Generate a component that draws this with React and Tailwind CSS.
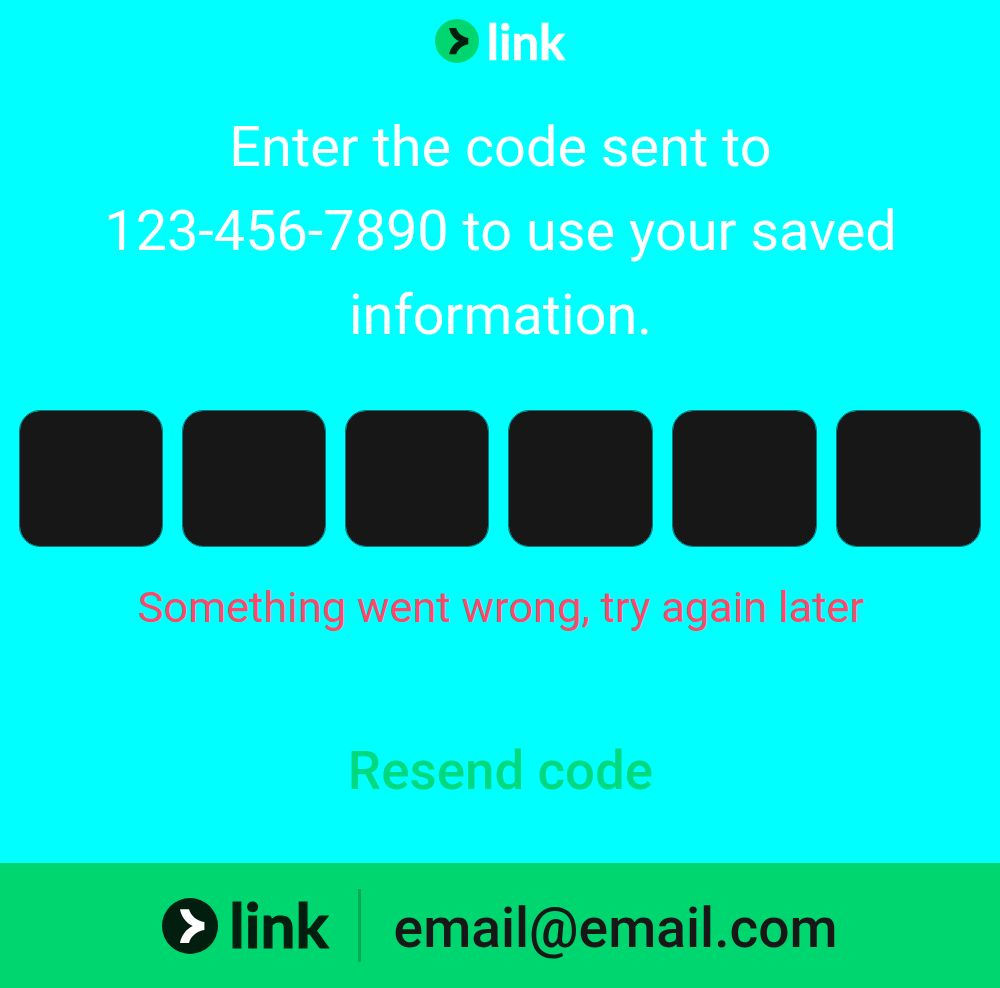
function Mark({ size, bg, fg }) {
  return (
    <svg width={size} height={size} viewBox="0 0 56 56" className="shrink-0">
      <circle cx="28" cy="28" r="28" fill={bg} />
      <path d="M27 11.3H18C19.3 18.500 24 25 30.8 28.100C24 31.300 19.300 37.700 18 45H27C28.600 38.400 35 33.200 42.400 32.100V24.100C35 23 28.600 17.800 27 11.300Z" fill={fg} />
    </svg>
  );
}

export default function App() {
  return (
    <main className="flex h-[988px] w-[1000px] flex-col overflow-hidden bg-[#00ffff] font-['Roboto',sans-serif]">
      <header className="flex h-[82px] items-center justify-center gap-2 text-white">
        <Mark size={44} bg="#00d66f" fg="#011e0f" />
        <span className="font-['Lato',sans-serif] text-[49px] leading-none font-bold [-webkit-text-stroke:0.6px_#ffffff]">link</span>
      </header>
      <h1 className="mt-[23px] pl-px text-center text-[55.8px] leading-[84px] font-normal text-white">
        Enter the code sent to<br />123-456-7890 to use your saved<br />information.
      </h1>
      <div className="mt-[53px] grid grid-cols-[144px_144px_144px_145px_145px_145px] gap-[19px] pl-[19px]">
        {[0, 1, 2, 3, 4, 5].map((n) => (
          <div key={n} className="h-[137px] rounded-[21px] border border-[#0e7676] bg-[#171717] bg-clip-padding" />
        ))}
      </div>
      <p className="mt-[31px] pl-[2px] text-center text-[43.4px] leading-[60px] text-[#ff4768]">Something went wrong, try again later</p>
      <button className="mt-[101px] h-[64px] pl-px text-center text-[52.9px] leading-[64px] font-medium text-[#00d980]">Resend code</button>
      <footer className="mt-auto flex h-[125px] items-center justify-center bg-[#00d66f] text-[#171717]">
        <Mark size={56} bg="#011e0f" fg="#ffffff" />
        <span className="-mt-[3px] ml-[11px] font-['Lato',sans-serif] text-[62px] leading-none font-bold text-[#011e0f] [-webkit-text-stroke:1.2px_#011e0f]">link</span>
        <span className="ml-[29px] h-[73px] w-[3px] bg-[#00ab58]" />
        <span className="ml-[33px] pt-[7px] text-[55.2px] leading-none font-medium">email@email.com</span>
      </footer>
    </main>
  );
}
